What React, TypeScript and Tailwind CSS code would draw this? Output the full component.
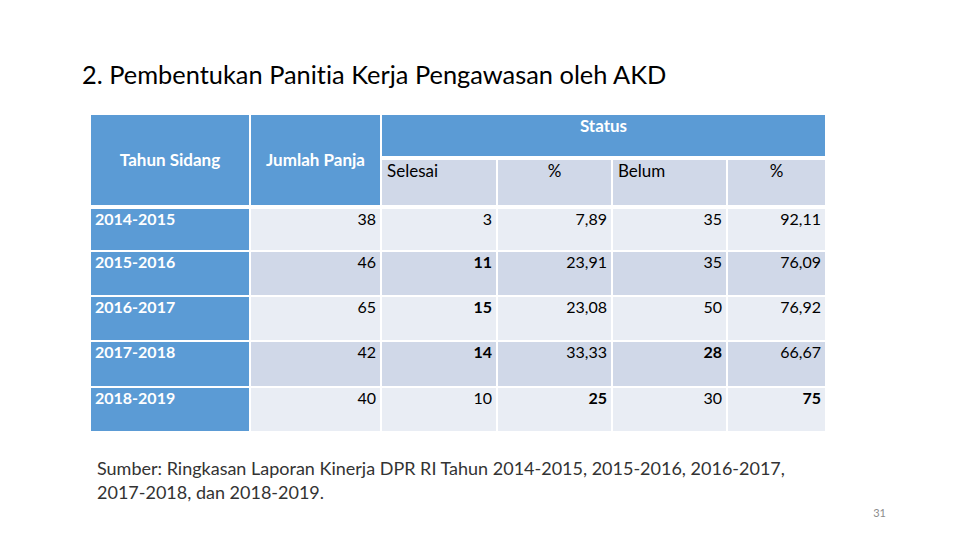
import React from 'react'

type Cell = { v: string; b?: boolean }

const rows: { year: string; cells: Cell[] }[] = [
    { year: '2014-2015', cells: [{ v: '38' }, { v: '3' }, { v: '7,89' }, { v: '35' }, { v: '92,11' }] },
    { year: '2015-2016', cells: [{ v: '46' }, { v: '11', b: true }, { v: '23,91' }, { v: '35' }, { v: '76,09' }] },
    { year: '2016-2017', cells: [{ v: '65' }, { v: '15', b: true }, { v: '23,08' }, { v: '50' }, { v: '76,92' }] },
    { year: '2017-2018', cells: [{ v: '42' }, { v: '14', b: true }, { v: '33,33' }, { v: '28', b: true }, { v: '66,67' }] },
    { year: '2018-2019', cells: [{ v: '40' }, { v: '10' }, { v: '25', b: true }, { v: '30' }, { v: '75', b: true }] },
]

const rowHeights = ['h-[41px]', 'h-[43px]', 'h-[43px]', 'h-[44px]', 'h-[43px]']

const App = () => {
    return (
        <div className="w-[960px] h-[540px] bg-white overflow-hidden [font-variant-ligatures:none]" style={{ fontFamily: 'Lato, "Liberation Sans", sans-serif' }}>
            <h1 className="pl-[82px] pt-[59px] text-[25.4px] leading-[30px] text-black">
                2. Pembentukan Panitia Kerja Pengawasan oleh AKD
            </h1>

            <div className="ml-[91px] mt-[26px] w-[734px] text-[16px] leading-5">
                {/* header */}
                <div className="grid grid-cols-[158px_129px_114px_113px_113px_97px] grid-rows-[41px_45px] gap-x-[2px] gap-y-[4px] text-[17px]">
                    <div className="row-span-2 bg-[#5b9bd5] text-white font-bold flex items-center justify-center">Tahun Sidang</div>
                    <div className="row-span-2 bg-[#5b9bd5] text-white font-bold flex items-center justify-center">Jumlah Panja</div>
                    <div className="col-span-4 bg-[#5b9bd5] text-white font-bold text-center pt-[1px]">Status</div>
                    <div className="bg-[#d0d8e8] pl-[5px] pt-[1px] text-black">Selesai</div>
                    <div className="bg-[#d0d8e8] text-center pt-[1px] text-black">%</div>
                    <div className="bg-[#d0d8e8] pl-[5px] pt-[1px] text-black">Belum</div>
                    <div className="bg-[#d0d8e8] text-center pt-[1px] text-black">%</div>
                </div>

                {/* body */}
                <div className="mt-[4px] flex flex-col gap-[2px]">
                    {rows.map((row, i) => (
                        <div key={row.year} className={`grid grid-cols-[158px_129px_114px_113px_113px_97px] gap-x-[2px] ${rowHeights[i]}`}>
                            <div className="bg-[#5b9bd5] text-white font-bold pl-[4px]">{row.year}</div>
                            {row.cells.map((c, j) => (
                                <div
                                    key={j}
                                    className={`${i % 2 === 0 ? 'bg-[#e9edf4]' : 'bg-[#d0d8e8]'} text-right pr-[4px] text-black ${c.b ? 'font-bold' : ''}`}
                                >
                                    {c.v}
                                </div>
                            ))}
                        </div>
                    ))}
                </div>
            </div>

            <p className="pl-[97px] mt-[25px] text-[18px] leading-6 text-[#333333]">
                Sumber: Ringkasan Laporan Kinerja DPR RI Tahun 2014-2015, 2015-2016, 2016-2017,
                <br />
                2017-2018, dan 2018-2019.
            </p>

            <div className="mt-[2px] pr-[74px] text-right text-[11px] leading-[14px] text-[#8c8c8c]">31</div>
        </div>
    )
}

export default App
